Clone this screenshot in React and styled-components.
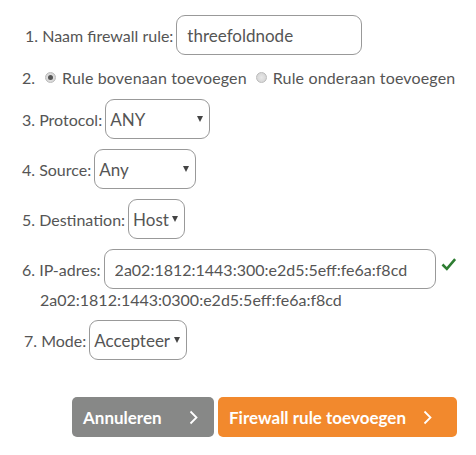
import React from 'react'
import styled, { createGlobalStyle } from 'styled-components'

const GlobalStyle = createGlobalStyle`
  html, body { margin: 0; padding: 0; background: #fff; }
  body { font-family: Lato, "Open Sans", sans-serif; color: #555; }
  * { box-sizing: border-box; }
`

const Form = styled.form`
  display: flex;
  flex-direction: column;
  gap: 10px;
  padding: 15px 19px 0 22px;
  width: 476px;
  font-size: 16px;
`

const Row = styled.div`
  display: flex;
  align-items: center;
  gap: 3px;
  height: ${p => p.$h || 40}px;
`

const Label = styled.label`
  white-space: nowrap;
  margin-left: ${p => p.$ml || 0}px;
`

const TextInput = styled.input`
  width: ${p => p.$w}px;
  height: 40px;
  border: 1px solid #999;
  border-radius: 9px;
  padding: 0 10px;
  font: inherit;
  font-size: ${p => p.$fs || 16}px;
  color: #555;
  outline: none;
  background: #fff;
`

const SelectWrap = styled.div`
  position: relative;
  width: ${p => p.$w}px;
  height: 40px;
`

const Select = styled.select`
  appearance: none;
  width: 100%;
  height: 100%;
  border: 1px solid #999;
  border-radius: 9px;
  padding: 0 14px 0 4px;
  font: inherit;
  font-size: 17px;
  color: #555;
  background: #fff;
  outline: none;
`

const Arrow = styled.span`
  position: absolute;
  right: 7px;
  top: 17px;
  width: 0;
  height: 0;
  border-left: 3px solid transparent;
  border-right: 3px solid transparent;
  border-top: 6px solid #444;
  pointer-events: none;
`

const RadioGroup = styled.label`
  display: flex;
  align-items: center;
  gap: 6px;
  margin-left: ${p => p.$ml || 0}px;
  letter-spacing: 0.15px;
`

const Radio = styled.input`
  appearance: none;
  margin: 0;
  width: 11px;
  height: 11px;
  border-radius: 50%;
  border: 1px solid #bbb;
  background: radial-gradient(circle, #e8e8e8 0, #d0d0d0 100%);
  position: relative;
  &:checked::after {
    content: '';
    position: absolute;
    left: 2px;
    top: 2px;
    width: 5px;
    height: 5px;
    border-radius: 50%;
    background: #555;
  }
`

const IpGroup = styled.div`
  display: flex;
  flex-direction: column;
`

const Note = styled.div`
  padding: 1px 0 0 18px;
  line-height: 20px;
`

const Check = styled.svg`
  width: 16px;
  height: 14px;
  margin-left: 2px;
  margin-top: -10px;
`

const Actions = styled.div`
  display: flex;
  justify-content: flex-end;
  gap: 4px;
  margin-top: 27px;
`

const Button = styled.button`
  display: flex;
  align-items: center;
  justify-content: space-between;
  width: ${p => p.$w}px;
  height: 40px;
  border: 0;
  border-radius: 5px;
  padding: 0 ${p => p.$pr}px 0 11px;
  background: ${p => p.$bg};
  color: #fff;
  font: inherit;
  font-weight: 700;
  font-size: 17px;
`

const Chevron = () => (
  <svg width="9" height="15" viewBox="0 0 9 15">
    <path d="M1.5 1.5 L7.5 7.5 L1.5 13.5" fill="none" stroke="#fff" strokeWidth="1.8" />
  </svg>
)

const Dropdown = ({ w, value, options }) => (
  <SelectWrap $w={w}>
    <Select defaultValue={value}>
      {options.map(o => <option key={o}>{o}</option>)}
    </Select>
    <Arrow />
  </SelectWrap>
)

const App = () => (
  <>
    <GlobalStyle />
    <Form onSubmit={e => e.preventDefault()}>
      <Row>
        <Label $ml={3}>1. Naam firewall rule:</Label>
        <TextInput $w={186} $fs={17} defaultValue="threefoldnode" />
      </Row>
      <Row $h={24}>
        <Label>2.</Label>
        <RadioGroup $ml={7}>
          <Radio type="radio" name="pos" defaultChecked />
          Rule bovenaan toevoegen
        </RadioGroup>
        <RadioGroup $ml={6}>
          <Radio type="radio" name="pos" />
          Rule onderaan toevoegen
        </RadioGroup>
      </Row>
      <Row>
        <Label>3. Protocol:</Label>
        <Dropdown w={105} value="ANY" options={['ANY', 'TCP', 'UDP', 'ICMP']} />
      </Row>
      <Row>
        <Label>4. Source:</Label>
        <Dropdown w={102} value="Any" options={['Any', 'Host', 'Network']} />
      </Row>
      <Row>
        <Label>5. Destination:</Label>
        <Dropdown w={57} value="Host" options={['Any', 'Host', 'Network']} />
      </Row>
      <IpGroup>
        <Row>
          <Label>6. IP-adres:</Label>
          <TextInput $w={341} defaultValue="2a02:1812:1443:300:e2d5:5eff:fe6a:f8cd" />
          <Check viewBox="0 0 16 14">
            <path d="M1.5 7.5 L6 12 L14.5 2" fill="none" stroke="#2e7d32" strokeWidth="2.6" />
          </Check>
        </Row>
        <Note>2a02:1812:1443:0300:e2d5:5eff:fe6a:f8cd</Note>
      </IpGroup>
      <Row>
        <Label $ml={2}>7. Mode:</Label>
        <Dropdown w={98} value="Accepteer" options={['Accepteer', 'Weiger']} />
      </Row>
      <Actions>
        <Button type="button" $w={142} $pr={16} $bg="#878887">
          Annuleren <Chevron />
        </Button>
        <Button type="submit" $w={239} $pr={25} $bg="#f2892d">
          Firewall rule toevoegen <Chevron />
        </Button>
      </Actions>
    </Form>
  </>
)

export default App
